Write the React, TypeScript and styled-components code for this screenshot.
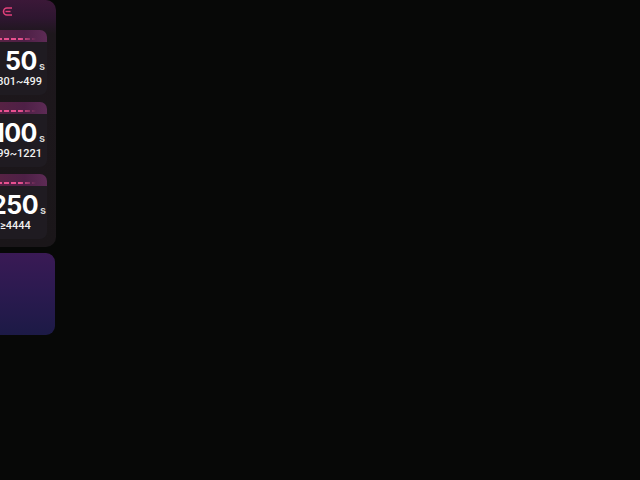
import React from "react";
import styled, { createGlobalStyle } from "styled-components";

const Global = createGlobalStyle`
  html, body { margin: 0; padding: 0; background: #070807; }
  body { width: 640px; height: 480px; overflow: hidden; font-family: Inter, "Noto Sans", sans-serif; }
`;

const Stage = styled.div`
  display: flex;
  flex-direction: column;
  gap: 6px;
  width: 76px;
  margin-left: -20px;
`;

const Panel = styled.div`
  display: flex;
  flex-direction: column;
  background: linear-gradient(180deg, #3b1838 0px, #2e1630 18px, #1d171c 34px, #1a1619 100%);
  border-radius: 0 10px 10px 0;
  padding-bottom: 8px;
`;

const Header = styled.div`
  height: 22px;
  display: flex;
  align-items: center;
  padding-left: 22px;
`;

const Cards = styled.div`
  display: flex;
  flex-direction: column;
  gap: 7px;
  padding: 8px 9px 0 11px;
`;

const Card = styled.div`
  height: 65px;
  border-radius: 7px;
  background: #1f1b21;
  overflow: hidden;
  display: flex;
  flex-direction: column;
`;

const Stripe = styled.div`
  height: 12px;
  padding-top: 8px;
  box-sizing: border-box;
  background: linear-gradient(90deg, #5a2343 0%, #4e2046 60%, #5d2b55 100%);
`;

const Dashes = styled.div`
  height: 2px;
  width: 70%;
  margin-left: 6px;
  background: repeating-linear-gradient(90deg, #e8508f 0 5px, transparent 5px 7px);
  -webkit-mask-image: linear-gradient(90deg, #000 60%, transparent);
  mask-image: linear-gradient(90deg, #000 60%, transparent);
`;

const Price = styled.div`
  margin-top: 6px;
  padding-right: 2px;
  text-align: right;
  color: #ffffff;
  font-family: Inter, sans-serif;
  font-weight: 700;
  font-size: 25px;
  line-height: 26px;
  letter-spacing: -0.5px;
  white-space: nowrap;
`;

const Unit = styled.span`
  font-size: 11px;
  font-weight: 600;
  letter-spacing: 0;
  color: #d8d8d8;
  margin-left: 2px;
`;

const Range = styled.div`
  margin-top: -4px;
  padding-right: 7px;
  text-align: center;
  color: #f0f0f0;
  font-family: Roboto, sans-serif;
  font-weight: 500;
  font-size: 11px;
  line-height: 14px;
  white-space: nowrap;
`;

const Promo = styled.div`
  height: 82px;
  width: 75px;
  border-radius: 0 9px 9px 0;
  background: linear-gradient(180deg, #3a1a55 0%, #2c1a50 45%, #1c1a46 100%);
`;

const tiers = [
  { price: "50", range: "1301~499" },
  { price: "100", range: "499~1221" },
  { price: "250", range: "≥4444" },
];

const EuroIcon = () => (
  <svg width="11" height="9" viewBox="0 0 11 9" fill="none">
    <path d="M10 1 H5 A3.5 3.5 0 0 0 5 8 H10" stroke="#e0407a" strokeWidth="1.6" />
    <path d="M3.5 4.5 H8.5" stroke="#e0407a" strokeWidth="1.4" />
  </svg>
);

export default function App() {
  return (
    <>
      <Global />
      <Stage>
        <Panel>
          <Header>
            <EuroIcon />
          </Header>
          <Cards>
            {tiers.map((t) => (
              <Card key={t.price}>
                <Stripe>
                  <Dashes />
                </Stripe>
                <Price>
                  {t.price}
                  <Unit>s</Unit>
                </Price>
                <Range>{t.range}</Range>
              </Card>
            ))}
          </Cards>
        </Panel>
        <Promo />
      </Stage>
    </>
  );
}
